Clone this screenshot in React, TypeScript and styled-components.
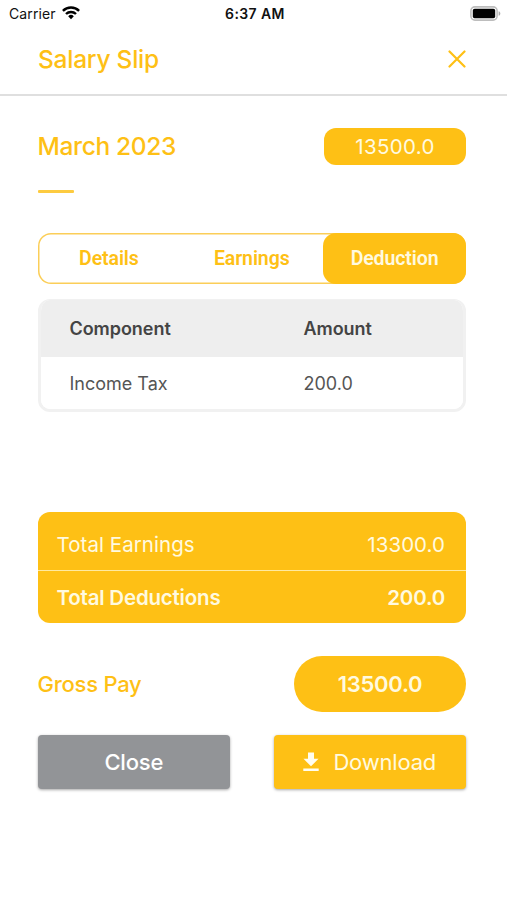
import React from "react";
import styled, { createGlobalStyle } from "styled-components";

const yellow = "#fec015";
const cream = "#fffae0";

const GlobalStyle = createGlobalStyle`
  * { box-sizing: border-box; }
  body { margin: 0; background: #fff; }
  button { border: 0; padding: 0; background: none; font: inherit; color: inherit; }
`;

const Screen = styled.div`
  width: 507px;
  height: 900px;
  overflow: hidden;
  background: #fff;
  color: #444;
  font-family: Inter, "Liberation Sans", sans-serif;
`;

const StatusBar = styled.div`
  height: 26px;
  padding: 0 6px 0 9px;
  display: grid;
  grid-template-columns: 1fr auto 1fr;
  align-items: center;
  color: #111;
  svg { display: block; }
`;

const Carrier = styled.div`
  display: flex;
  align-items: center;
  gap: 6px;
  font-size: 14px;
  letter-spacing: 0.1px;
`;

const Clock = styled.div`
  font-size: 14px;
  font-weight: 600;
  letter-spacing: 0.4px;
`;

const Battery = styled.div`
  justify-self: end;
`;

const Header = styled.header`
  height: 70px;
  padding: 0 41px 2px 38px;
  display: flex;
  align-items: center;
  justify-content: space-between;
  border-bottom: 2px solid #dfdfdf;
`;

const Heading = styled.h1<{ $spacing: number }>`
  margin: 0;
  color: ${yellow};
  font-size: 24.5px;
  line-height: 30px;
  font-weight: 500;
  letter-spacing: ${(p) => p.$spacing}px;
`;

const Content = styled.main`
  padding: 32px 41px 0 37.5px;
`;

const MonthRow = styled.div`
  height: 36px;
  display: flex;
  align-items: center;
  justify-content: space-between;
`;

const AmountTag = styled.div`
  width: 142px;
  height: 37px;
  border-radius: 12px;
  background: ${yellow};
  color: ${cream};
  font-size: 20.5px;
  letter-spacing: 0.35px;
  display: flex;
  align-items: center;
  justify-content: center;
`;

const Dash = styled.div`
  width: 36px;
  height: 3px;
  margin-top: 26px;
  border-radius: 1px;
  background: #fdcb40;
`;

const Tabs = styled.div`
  height: 51px;
  margin-top: 40px;
  display: grid;
  grid-template-columns: repeat(3, 1fr);
  border-radius: 13px;
  box-shadow: inset 0 0 0 1.5px #fbce58;
`;

const Tab = styled.button<{ $active?: boolean }>`
  border-radius: 13px;
  background: ${(p) => (p.$active ? yellow : "transparent")};
  color: ${(p) => (p.$active ? cream : yellow)};
  font-family: Roboto, sans-serif;
  font-size: 19.5px;
  font-weight: 600;
  letter-spacing: -0.1px;
`;

const Table = styled.div`
  height: 113px;
  margin-top: 15px;
  border: 3px solid #f1f1f1;
  border-top-width: 1px;
  border-radius: 12px;
  overflow: hidden;
`;

const TableRow = styled.div<{ $head?: boolean }>`
  height: ${(p) => (p.$head ? 57 : 52)}px;
  padding-left: 29px;
  display: grid;
  grid-template-columns: 234px 1fr;
  align-items: center;
  background: ${(p) => (p.$head ? "#eee" : "#fff")};
  color: ${(p) => (p.$head ? "#444" : "#555")};
  font-size: 18px;
  font-weight: ${(p) => (p.$head ? 600 : 400)};
  letter-spacing: ${(p) => (p.$head ? -0.05 : 0)}px;
`;

const Totals = styled.div`
  height: 111px;
  margin-top: 100px;
  border-radius: 12px;
  overflow: hidden;
  background: ${yellow};
  color: ${cream};
`;

const TotalRow = styled.div<{ $strong?: boolean }>`
  height: ${(p) => (p.$strong ? 52 : 59)}px;
  padding: ${(p) => (p.$strong ? "0 21px 0 19px" : "7px 21px 0 19px")};
  border-bottom: ${(p) => (p.$strong ? "0" : "1.5px solid #ffeaa0")};
  display: flex;
  align-items: center;
  justify-content: space-between;
  font-size: 20.5px;
  font-weight: ${(p) => (p.$strong ? 600 : 400)};
  letter-spacing: ${(p) => (p.$strong ? -0.2 : 0.05)}px;
`;

const GrossRow = styled.div`
  height: 56px;
  margin-top: 33px;
  display: flex;
  align-items: center;
  justify-content: space-between;
`;

const GrossLabel = styled.div`
  color: ${yellow};
  font-size: 22px;
  font-weight: 500;
  letter-spacing: -0.25px;
`;

const GrossPill = styled.div`
  width: 172px;
  height: 56px;
  border-radius: 28px;
  background: ${yellow};
  color: ${cream};
  font-size: 22px;
  font-weight: 600;
  letter-spacing: -0.25px;
  display: flex;
  align-items: center;
  justify-content: center;
`;

const Actions = styled.div`
  margin-top: 23px;
  display: flex;
  justify-content: space-between;
`;

const ActionButton = styled.button<{ $muted?: boolean }>`
  width: 192.5px;
  height: 54px;
  border-radius: 4px;
  display: flex;
  align-items: center;
  justify-content: center;
  gap: 14px;
  background: ${(p) => (p.$muted ? "#929497" : yellow)};
  color: ${(p) => (p.$muted ? "#fff" : cream)};
  box-shadow: 0 1px 3px rgba(0, 0, 0, 0.35);
  font-size: 22px;
  font-weight: ${(p) => (p.$muted ? 500 : 400)};
  letter-spacing: -0.2px;
`;

const WifiIcon = () => (
  <svg width="18" height="14" viewBox="0 0 18 14" fill="none" stroke="#000" strokeWidth="2.4">
    <path d="M.9 4.9a11.5 11.5 0 0 1 16.2 0" />
    <path d="M4 8a7.1 7.1 0 0 1 10 0" />
    <path d="M6.2 10.2a4 4 0 0 1 5.6 0L9 13.2Z" fill="#000" stroke="none" />
  </svg>
);

const BatteryIcon = () => (
  <svg width="31" height="15" viewBox="0 0 31 15">
    <rect x=".9" y=".9" width="26.2" height="13.2" rx="4" fill="#fff" stroke="#bdbdbd" strokeWidth="1.6" />
    <rect x="2.8" y="2.8" width="22.4" height="9.4" rx="1.8" fill="#000" />
    <path d="M28.6 5.2c2.3.7 2.3 3.9 0 4.6Z" fill="#aaa" />
  </svg>
);

const CloseIcon = () => (
  <svg width="18" height="18" viewBox="0 0 18 18" stroke={yellow} strokeWidth="2.2" strokeLinecap="round">
    <path d="M1.5 1.5l15 15M16.5 1.5l-15 15" />
  </svg>
);

const DownloadIcon = () => (
  <svg width="16" height="20" viewBox="0 0 16 20" fill="#fffdf0">
    <path d="M5 .5h6v6.3h4.5L8 14.3.5 6.8H5ZM.3 16.6h15.4v2.4H.3Z" />
  </svg>
);

export default function App() {
  return (
    <Screen>
      <GlobalStyle />
      <StatusBar>
        <Carrier>
          Carrier <WifiIcon />
        </Carrier>
        <Clock>6:37 AM</Clock>
        <Battery>
          <BatteryIcon />
        </Battery>
      </StatusBar>
      <Header>
        <Heading $spacing={-0.25}>Salary Slip</Heading>
        <CloseIcon />
      </Header>
      <Content>
        <MonthRow>
          <Heading as="h2" $spacing={-0.35}>
            March 2023
          </Heading>
          <AmountTag>13500.0</AmountTag>
        </MonthRow>
        <Dash />
        <Tabs>
          <Tab>Details</Tab>
          <Tab>Earnings</Tab>
          <Tab $active>Deduction</Tab>
        </Tabs>
        <Table>
          <TableRow $head>
            <span>Component</span>
            <span>Amount</span>
          </TableRow>
          <TableRow>
            <span>Income Tax</span>
            <span>200.0</span>
          </TableRow>
        </Table>
        <Totals>
          <TotalRow>
            <span>Total Earnings</span>
            <span>13300.0</span>
          </TotalRow>
          <TotalRow $strong>
            <span>Total Deductions</span>
            <span>200.0</span>
          </TotalRow>
        </Totals>
        <GrossRow>
          <GrossLabel>Gross Pay</GrossLabel>
          <GrossPill>13500.0</GrossPill>
        </GrossRow>
        <Actions>
          <ActionButton $muted>Close</ActionButton>
          <ActionButton>
            <DownloadIcon />
            Download
          </ActionButton>
        </Actions>
      </Content>
    </Screen>
  );
}
